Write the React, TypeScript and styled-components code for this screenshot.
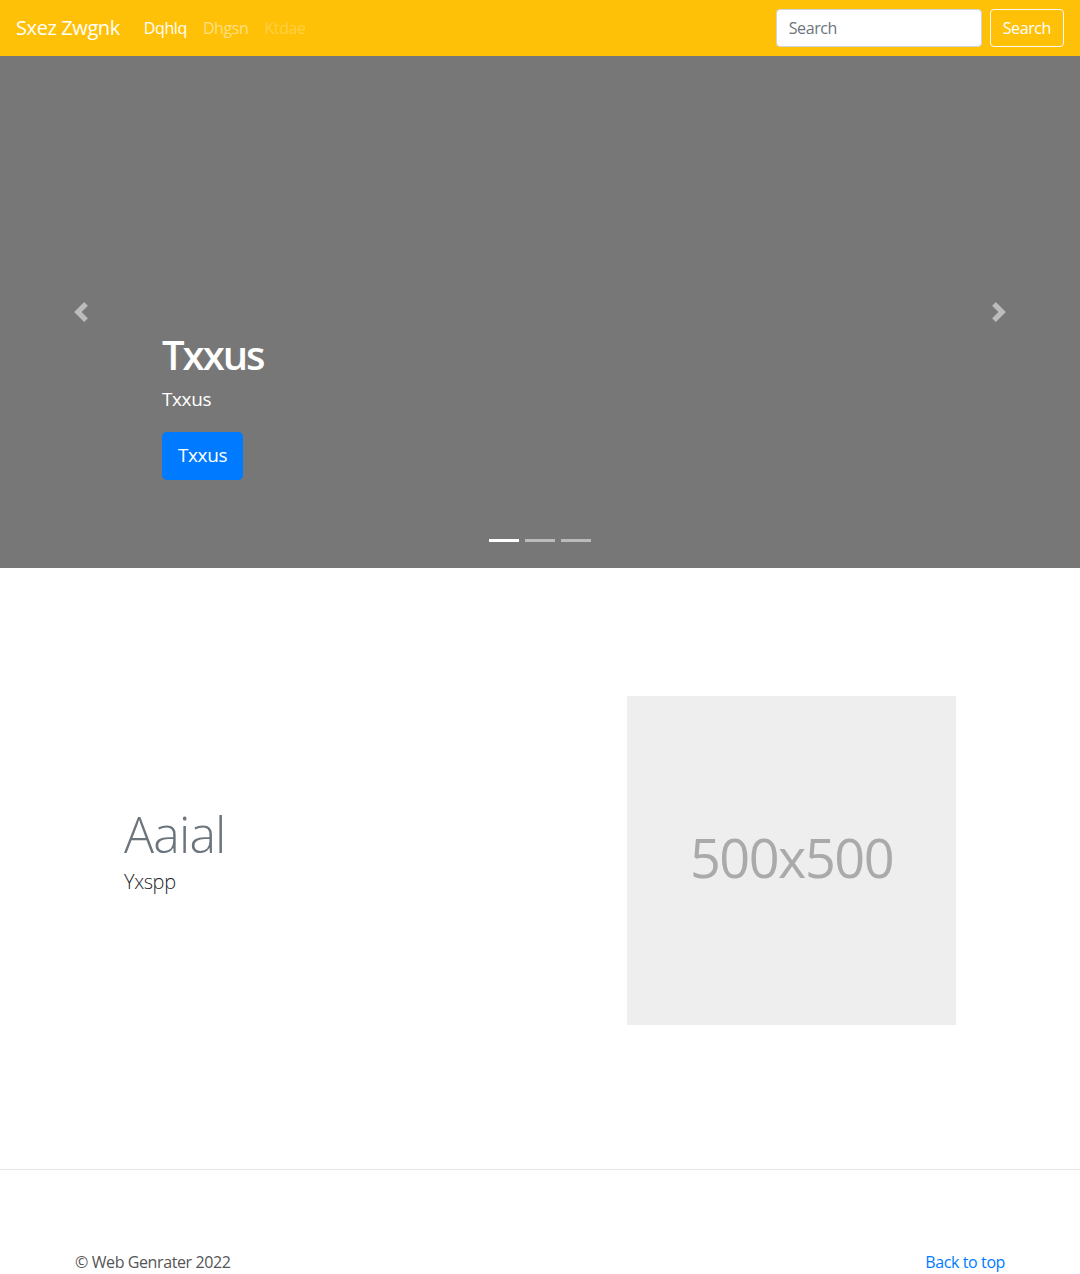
import * as React from 'react';
import styled, { createGlobalStyle } from 'styled-components';

const GlobalStyle = createGlobalStyle`
  * { box-sizing: border-box; }
  body {
    margin: 0;
    font-family: 'Open Sans', 'Noto Sans', sans-serif;
    font-size: 16px;
    line-height: 1.5;
    letter-spacing: -0.025em;
    color: #212529;
    background: #fff;
  }
`;

const slides = [0, 1, 2];

const App = () => {
  return (
    <>
      <GlobalStyle />
      <Navbar>
        <Brand href="#">Sxez Zwgnk</Brand>
        <NavList>
          <NavLink href="#" $state="active">Dqhlq</NavLink>
          <NavLink href="#" $state="normal">Dhgsn</NavLink>
          <NavLink href="#" $state="disabled">Ktdae</NavLink>
        </NavList>
        <SearchForm onSubmit={(e) => e.preventDefault()}>
          <SearchInput type="text" placeholder="Search" />
          <SearchButton type="submit">Search</SearchButton>
        </SearchForm>
      </Navbar>

      <Carousel>
        <Indicators>
          {slides.map((i) => (
            <Indicator key={i} $active={i === 0} />
          ))}
        </Indicators>
        <Caption>
          <CaptionTitle>Txxus</CaptionTitle>
          <CaptionText>Txxus</CaptionText>
          <PrimaryButton href="#">Txxus</PrimaryButton>
        </Caption>
        <Control href="#" $side="prev">
          <svg width="20" height="20" viewBox="0 0 8 8" fill="#fff">
            <path d="M5.25 0l-4 4 4 4 1.5-1.5L4.25 4l2.5-2.5L5.25 0z" />
          </svg>
        </Control>
        <Control href="#" $side="next">
          <svg width="20" height="20" viewBox="0 0 8 8" fill="#fff">
            <path d="M2.75 0l-1.5 1.5L3.75 4l-2.5 2.5L2.75 8l4-4-4-4z" />
          </svg>
        </Control>
      </Carousel>

      <Featurette>
        <FeaturetteText>
          <FeaturetteHeading>Aaial</FeaturetteHeading>
          <Lead>Yxspp</Lead>
        </FeaturetteText>
        <Placeholder>500x500</Placeholder>
      </Featurette>

      <Divider />

      <Footer>
        <FooterText>© Web Genrater 2022</FooterText>
        <BackToTop href="#">Back to top</BackToTop>
      </Footer>
    </>
  );
};

const Navbar = styled.nav`
  display: flex;
  align-items: center;
  height: 56px;
  padding: 0 16px;
  background-color: #ffc107;
`;

const Brand = styled.a`
  margin-right: 16px;
  font-size: 20px;
  line-height: 30px;
  color: #fff;
  text-decoration: none;
  white-space: nowrap;
`;

const NavList = styled.div`
  display: flex;
  flex: 1;
`;

const NavLink = styled.a<{ $state: 'active' | 'normal' | 'disabled' }>`
  padding: 8px;
  color: ${(p) =>
    p.$state === 'active'
      ? '#fff'
      : p.$state === 'normal'
      ? 'rgba(255, 255, 255, 0.5)'
      : 'rgba(255, 255, 255, 0.25)'};
  text-decoration: none;
`;

const SearchForm = styled.form`
  display: flex;
  align-items: center;
  gap: 8px;
`;

const SearchInput = styled.input`
  width: 206px;
  height: 38px;
  padding: 6px 12px;
  font-family: inherit;
  font-size: 16px;
  letter-spacing: inherit;
  color: #495057;
  background: #fff;
  border: 1px solid #ced4da;
  border-radius: 4px;
  outline: none;

  &::placeholder {
    color: #6c757d;
  }
`;

const SearchButton = styled.button`
  height: 38px;
  padding: 6px 12px;
  font-family: inherit;
  font-size: 16px;
  letter-spacing: inherit;
  color: #fff;
  background: transparent;
  border: 1px solid #f8f9fa;
  border-radius: 4px;
`;

const Carousel = styled.section`
  position: relative;
  display: flex;
  flex-direction: column;
  justify-content: flex-end;
  height: 512px;
  padding: 0 15% 88px;
  background-color: #777;
`;

const Caption = styled.div`
  position: relative;
  z-index: 2;
  color: #fff;
`;

const CaptionTitle = styled.h1`
  margin: 0 0 8px;
  font-size: 40px;
  font-weight: 600;
  line-height: 1.2;
  letter-spacing: -2px;
`;

const CaptionText = styled.p`
  margin: 0 0 21px;
  font-size: 19px;
  line-height: 24px;
`;

const PrimaryButton = styled.a`
  display: inline-block;
  height: 48px;
  padding: 8px 16px;
  font-size: 19px;
  line-height: 30px;
  color: #fff;
  background-color: #007bff;
  border-radius: 4.8px;
  text-decoration: none;
`;

const Control = styled.a<{ $side: 'prev' | 'next' }>`
  position: absolute;
  top: 0;
  bottom: 0;
  ${(p) => (p.$side === 'prev' ? 'left: 0;' : 'right: 0;')}
  width: 15%;
  display: flex;
  align-items: center;
  justify-content: center;
  opacity: 0.5;
`;

const Indicators = styled.ol`
  position: absolute;
  left: 0;
  right: 0;
  bottom: 26px;
  z-index: 3;
  display: flex;
  justify-content: center;
  gap: 6px;
  margin: 0;
  padding: 0;
  list-style: none;
`;

const Indicator = styled.li<{ $active: boolean }>`
  width: 30px;
  height: 3px;
  background-color: #fff;
  opacity: ${(p) => (p.$active ? 1 : 0.5)};
`;

const Featurette = styled.section`
  display: flex;
  align-items: center;
  padding: 128px 124px 144px;
`;

const FeaturetteText = styled.div`
  flex: 1;
`;

const FeaturetteHeading = styled.h2`
  margin: 0 0 8px;
  font-size: 50px;
  font-weight: 300;
  line-height: 1;
  letter-spacing: -0.8px;
  color: #6c757d;
`;

const Lead = styled.p`
  margin: 0 0 16px;
  font-size: 20px;
  font-weight: 300;
  line-height: 30px;
  color: #212529;
`;

const Placeholder = styled.div`
  display: flex;
  align-items: center;
  justify-content: center;
  width: 329px;
  height: 329px;
  padding-bottom: 6px;
  font-size: 54px;
  letter-spacing: -1.5px;
  color: #aaa;
  background-color: #eee;
`;

const Divider = styled.hr`
  margin: 0;
  border: 0;
  border-top: 1px solid #e5e5e5;
`;

const Footer = styled.footer`
  display: flex;
  justify-content: space-between;
  padding: 80px 75px 40px;
`;

const FooterText = styled.p`
  margin: 0;
  color: #555;
`;

const BackToTop = styled.a`
  color: #007bff;
  text-decoration: none;
`;

export default App;
